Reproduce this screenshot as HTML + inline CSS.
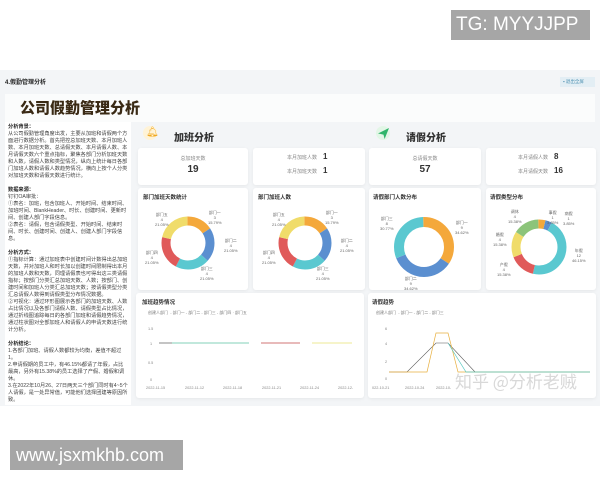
<!DOCTYPE html>
<html><head><meta charset="utf-8"><style>
*{margin:0;padding:0;box-sizing:border-box}
body{width:600px;height:480px;background:#fff;position:relative;overflow:hidden;font-family:"Liberation Sans","Noto Sans CJK SC",sans-serif;color:#333}
.a{position:absolute}
.card{position:absolute;background:#fff;border-radius:3px;box-shadow:0 1px 3px rgba(0,0,0,.06)}
.s{font-size:5px;color:#555;line-height:7px}
.t{font-size:5.5px;font-weight:bold;color:#333}
.lp{font-size:5.2px;line-height:7.0px;color:#444}
.lp b{color:#222}
.lb{position:absolute;font-size:4px;color:#666;line-height:5px;text-align:center}
</style></head><body>
<div class="a" style="left:451px;top:10px;width:139px;height:30px;background:#a6a6a6;color:#fff;font-size:19px;line-height:30px;padding-left:5px">TG: MYYJJPP</div>

<div class="a" style="left:0;top:70px;width:600px;height:336px;background:#f3f5f7"></div>
<div class="a" style="left:5px;top:77px;font-size:6px;font-weight:bold;color:#222">4.假勤管理分析</div>
<div class="a" style="left:560px;top:77px;width:35px;height:10px;background:#e3eef4;font-size:4.5px;color:#4a8fb0;line-height:10px;padding-left:3px">▪ 退出全屏</div>
<div class="a" style="left:5px;top:94px;width:590px;height:28px;background:#fbfcfc"></div>
<div class="a" style="left:20px;top:97px;font-size:15px;font-weight:900;color:#3a2a15">公司假勤管理分析</div>

<div class="a" style="left:5px;top:122px;width:126px;height:283px;background:#fff"></div>
<div class="a lp" style="left:8px;top:124px;width:120px">
<b>分析背景：</b><br>从公司假勤管理角度出发，主要从加班和请假两个方面进行数据分析。首先把控总加班天数、本月加班人数、本月加班天数、总请假天数、本月请假人数、本月请假天数六个重点指标，聚焦各部门分析加班天数和人数，请假人数和类型情况，纵向上统计每日各部门加班人数和请假人数趋势情况，横向上按个人分类对加班天数和请假天数进行统计。<br><br>
<b>数据来源：</b><br>钉钉OA审批：<br>①表名：加班，包含加班人、开始时间、结束时间、加班时间、BlankHeader、时长、创建时间、更新时间、创建人部门字段信息。<br>②表名：请假，包含请假类型、开始时间、结束时间、时长、创建时间、创建人、创建人部门字段信息。<br><br>
<b>分析方式：</b><br>①指标计算：通过加班表中创建时间计数得出总加班天数，并对加班人和时长加以创建时间限制得出本月的加班人数和天数，同理请假表也可得出这三类请假指标；按部门分类汇总加班天数、人数；按部门、创建时间和加班人分类汇总加班天数；按请假类型分类汇总请假人数得到请假类型分布情况数据。<br>②可视化：通过环形图展示各部门的加班天数、人数占比情况以及各部门请假人数、请假类型占比情况，通过折线图追踪每日的各部门加班和请假趋势情况，通过柱状图对全部加班人和请假人的申请天数进行统计分析。<br><br>
<b>分析结论：</b><br>1.各部门加班、请假人数都较为均衡，差值不超过1。<br>2.申请假期的员工中，有46.15%都请了年假，占比最高，另外有15.38%的员工选择了产假、婚假和调休。<br>3.在2022年10月26、27日两天三个部门同时有4~5个人请假，是一处异常值，可能他们选择团建等原因所致。
</div>

<div class="a" style="left:143px;top:126px;width:14px;height:14px;border-radius:50%;background:#fff3d6"></div>
<div class="a" style="left:146px;top:127px;font-size:10px;color:#f0a820">🔔︎</div>
<div class="a" style="left:174px;top:129px;font-size:10px;font-weight:900;color:#333">加班分析</div>
<div class="a" style="left:376px;top:126px;width:14px;height:14px;border-radius:50%;background:#e2f6e6"></div>
<svg class="a" style="left:378px;top:128px" width="11" height="11" viewBox="0 0 10 10"><path d="M0 5 L10 0 L6 10 L5 6 Z" fill="#2fb56a"/></svg>
<div class="a" style="left:406px;top:129px;font-size:10px;font-weight:900;color:#333">请假分析</div>

<div class="card" style="left:138px;top:148px;width:110px;height:37px"><div class="a s" style="left:0;width:110px;top:8px;text-align:center;color:#888">总加班天数</div><div class="a" style="left:0;width:110px;top:16px;text-align:center;font-size:10px;font-weight:bold">19</div></div>
<div class="card" style="left:253px;top:148px;width:112px;height:37px"><div class="a s" style="left:34px;top:7px;color:#888">本月加班人数</div><div class="a" style="left:70px;top:4px;font-size:8px;font-weight:bold">1</div><div class="a s" style="left:34px;top:21px;color:#888">本月加班天数</div><div class="a" style="left:70px;top:18px;font-size:8px;font-weight:bold">1</div></div>
<div class="card" style="left:369px;top:148px;width:112px;height:37px"><div class="a s" style="left:0;width:112px;top:8px;text-align:center;color:#888">总请假天数</div><div class="a" style="left:0;width:112px;top:16px;text-align:center;font-size:10px;font-weight:bold">57</div></div>
<div class="card" style="left:486px;top:148px;width:110px;height:37px"><div class="a s" style="left:32px;top:7px;color:#888">本月请假人数</div><div class="a" style="left:68px;top:4px;font-size:8px;font-weight:bold">8</div><div class="a s" style="left:32px;top:21px;color:#888">本月请假天数</div><div class="a" style="left:68px;top:18px;font-size:8px;font-weight:bold">16</div></div>

<div class="card" style="left:138px;top:188px;width:110px;height:102px"><div class="a t" style="left:5px;top:5px">部门加班天数统计</div></div>
<div class="card" style="left:253px;top:188px;width:112px;height:102px"><div class="a t" style="left:5px;top:5px">部门加班人数</div></div>
<div class="card" style="left:369px;top:188px;width:112px;height:102px"><div class="a t" style="left:4px;top:5px">请假部门人数分布</div></div>
<div class="card" style="left:486px;top:188px;width:110px;height:102px"><div class="a t" style="left:4px;top:5px">请假类型分布</div></div>

<svg class="a" style="left:0;top:0" width="600" height="480">
<g fill="none" stroke-width="9" transform="rotate(-90 188 243)">
<circle cx="188" cy="243" r="22" pathLength="100" stroke="#f4a83b" stroke-dasharray="15.79 84.21"/>
<circle cx="188" cy="243" r="22" pathLength="100" stroke="#5b8fd0" stroke-dasharray="21.05 78.95" stroke-dashoffset="-15.79"/>
<circle cx="188" cy="243" r="22" pathLength="100" stroke="#5ac8d0" stroke-dasharray="21.05 78.95" stroke-dashoffset="-36.84"/>
<circle cx="188" cy="243" r="22" pathLength="100" stroke="#e05a5a" stroke-dasharray="21.05 78.95" stroke-dashoffset="-57.89"/>
<circle cx="188" cy="243" r="22" pathLength="100" stroke="#f0dc6a" stroke-dasharray="21.06 78.94" stroke-dashoffset="-78.94"/>
</g>
<g fill="none" stroke-width="9" transform="rotate(-90 305 243)">
<circle cx="305" cy="243" r="22" pathLength="100" stroke="#f4a83b" stroke-dasharray="15.79 84.21"/>
<circle cx="305" cy="243" r="22" pathLength="100" stroke="#5b8fd0" stroke-dasharray="21.05 78.95" stroke-dashoffset="-15.79"/>
<circle cx="305" cy="243" r="22" pathLength="100" stroke="#5ac8d0" stroke-dasharray="21.05 78.95" stroke-dashoffset="-36.84"/>
<circle cx="305" cy="243" r="22" pathLength="100" stroke="#e05a5a" stroke-dasharray="21.05 78.95" stroke-dashoffset="-57.89"/>
<circle cx="305" cy="243" r="22" pathLength="100" stroke="#f0dc6a" stroke-dasharray="21.06 78.94" stroke-dashoffset="-78.94"/>
</g>
<g fill="none" stroke-width="10" transform="rotate(-90 424 247)">
<circle cx="424" cy="247" r="25" pathLength="100" stroke="#f4a83b" stroke-dasharray="34.62 65.38"/>
<circle cx="424" cy="247" r="25" pathLength="100" stroke="#5b8fd0" stroke-dasharray="34.62 65.38" stroke-dashoffset="-34.62"/>
<circle cx="424" cy="247" r="25" pathLength="100" stroke="#5ac8d0" stroke-dasharray="30.76 69.24" stroke-dashoffset="-69.24"/>
</g>
<g fill="none" stroke-width="9" transform="rotate(-90 539 247)">
<circle cx="539" cy="247" r="23" pathLength="100" stroke="#f4a83b" stroke-dasharray="3.85 96.15"/>
<circle cx="539" cy="247" r="23" pathLength="100" stroke="#5b8fd0" stroke-dasharray="3.85 96.15" stroke-dashoffset="-3.85"/>
<circle cx="539" cy="247" r="23" pathLength="100" stroke="#5ac8d0" stroke-dasharray="46.15 53.85" stroke-dashoffset="-7.7"/>
<circle cx="539" cy="247" r="23" pathLength="100" stroke="#e05a5a" stroke-dasharray="15.38 84.62" stroke-dashoffset="-53.85"/>
<circle cx="539" cy="247" r="23" pathLength="100" stroke="#f0dc6a" stroke-dasharray="15.38 84.62" stroke-dashoffset="-69.23"/>
<circle cx="539" cy="247" r="23" pathLength="100" stroke="#8cc47a" stroke-dasharray="15.39 84.61" stroke-dashoffset="-84.61"/>
</g>
</svg>
<div class="lb" style="left:208px;top:210px">部门一<br>3<br>15.79%</div>
<div class="lb" style="left:224px;top:238px">部门二<br>4<br>21.05%</div>
<div class="lb" style="left:200px;top:266px">部门三<br>4<br>21.05%</div>
<div class="lb" style="left:145px;top:250px">部门四<br>4<br>21.05%</div>
<div class="lb" style="left:155px;top:212px">部门五<br>4<br>21.05%</div>
<div class="lb" style="left:325px;top:210px">部门一<br>3<br>15.79%</div>
<div class="lb" style="left:340px;top:238px">部门二<br>4<br>21.05%</div>
<div class="lb" style="left:316px;top:266px">部门三<br>4<br>21.05%</div>
<div class="lb" style="left:262px;top:250px">部门四<br>4<br>21.05%</div>
<div class="lb" style="left:272px;top:212px">部门五<br>4<br>21.05%</div>
<div class="lb" style="left:455px;top:220px">部门一<br>9<br>34.62%</div>
<div class="lb" style="left:404px;top:276px">部门二<br>9<br>34.62%</div>
<div class="lb" style="left:380px;top:216px">部门三<br>8<br>30.77%</div>
<div class="lb" style="left:547px;top:210px">事假<br>1<br>3.85%</div>
<div class="lb" style="left:563px;top:211px">病假<br>1<br>3.85%</div>
<div class="lb" style="left:572px;top:248px">年假<br>12<br>46.15%</div>
<div class="lb" style="left:497px;top:262px">产假<br>4<br>15.38%</div>
<div class="lb" style="left:493px;top:232px">婚假<br>4<br>15.38%</div>
<div class="lb" style="left:508px;top:209px">调休<br>4<br>15.38%</div>

<div class="card" style="left:136px;top:293px;width:228px;height:105px"><div class="a t" style="left:6px;top:5px">加班趋势情况</div>
<div class="a s" style="left:12px;top:16px;font-size:4px;color:#777">创建人部门 &nbsp;- 部门一 - 部门二 - 部门三 - 部门四 · 部门五</div></div>
<div class="card" style="left:368px;top:293px;width:228px;height:105px"><div class="a t" style="left:4px;top:5px">请假趋势</div>
<div class="a s" style="left:8px;top:16px;font-size:4px;color:#777">创建人部门 &nbsp;- 部门一 - 部门二 - 部门三</div></div>
<svg class="a" style="left:0;top:0" width="600" height="480" font-family="Liberation Sans" font-size="3.8" fill="#888">
<text x="148" y="330">1.5</text><text x="150" y="345">1</text><text x="148" y="364">0.5</text><text x="150" y="381">0</text>
<text x="146" y="389">2022-11-15</text><text x="185" y="389">2022-11-12</text><text x="223" y="389">2022-11-18</text><text x="262" y="389">2022-11-21</text><text x="300" y="389">2022-11-24</text><text x="338" y="389">2022-12-</text>
<polyline points="159,343 172,343" stroke="#555" fill="none" stroke-width=".7"/>
<polyline points="172,343 249,343" stroke="#5ac0a0" fill="none" stroke-width=".7"/>
<polyline points="261,343 300,343" stroke="#c04848" fill="none" stroke-width=".7"/>
<polyline points="312,343 352,343" stroke="#e8e070" fill="none" stroke-width=".7"/>
<text x="385" y="330">6</text><text x="385" y="345">4</text><text x="385" y="363">2</text><text x="385" y="380">0</text>
<text x="372" y="389">022-10-21</text><text x="405" y="389">2022-10-24</text><text x="436" y="389">2022-10-</text>
<polyline points="389,372 407,372 436,343 448,343 475,372 590,372" stroke="#555" fill="none" stroke-width=".6"/>
<polyline points="389,372 427,372 436,333 448,333 458,372 590,372" stroke="#e8b040" fill="none" stroke-width=".7"/>
<polyline points="448,343 466,372 590,372" stroke="#5ac8c0" fill="none" stroke-width=".7"/>
<text x="455" y="388" font-size="17" fill="#d8d8d8" font-family="Noto Sans CJK SC">知乎 @分析老贼</text>
</svg>

<div class="a" style="left:10px;top:440px;width:173px;height:30px;background:#a6a6a6;color:#fff;font-size:18px;line-height:30px;padding-left:6px">www.jsxmkhb.com</div>
</body></html>
